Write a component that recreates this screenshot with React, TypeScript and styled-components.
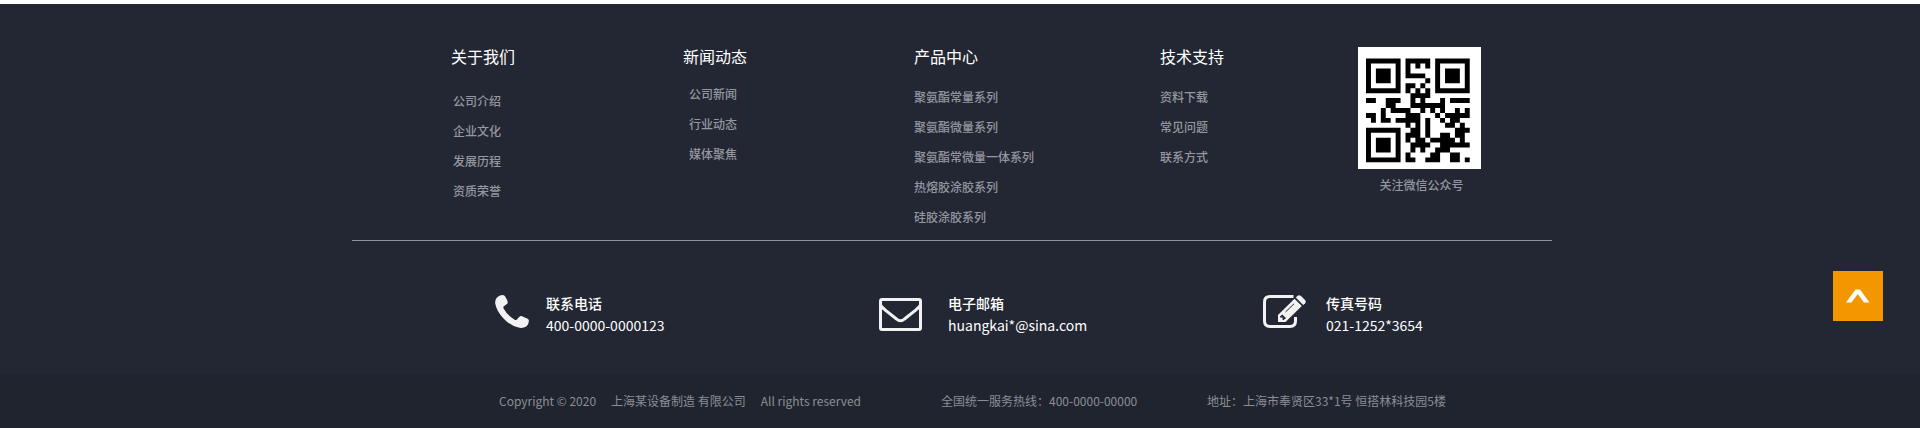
import React from 'react';
import styled, { createGlobalStyle } from 'styled-components';

const GlobalStyle = createGlobalStyle`
  * {
    box-sizing: border-box;
  }
  body {
    margin: 0;
    background: #fff;
    font-family: 'Noto Sans CJK SC', 'Noto Sans', sans-serif;
    font-size: 12px;
  }
`;

const Footer = styled.footer`
  margin-top: 4px;
  background: #232733;
  color: #9497a0;
`;

/* The content column sits in the page width less a 16px gutter on the right. */
const Band = styled.div`
  padding-right: 16px;
`;

const Container = styled.div`
  width: 100%;
  max-width: 1200px;
  margin: 0 auto;
`;

const SiteMap = styled(Container)`
  display: grid;
  grid-template-columns: 232fr 231fr 246fr 198fr 123fr;
  align-items: start;
  padding: 40px 71px 8px 99px;
  border-bottom: 1px solid #8f9197;
`;

const Heading = styled.h2`
  margin: 0;
  font-size: 16px;
  line-height: 24px;
  font-weight: 400;
  color: #fff;
`;

const LinkList = styled.ul<{ $top: number; $indent: number }>`
  list-style: none;
  margin: ${(p) => p.$top}px 0 0;
  padding: 0 0 0 ${(p) => p.$indent}px;
`;

const LinkItem = styled.li`
  line-height: 30px;
  font-weight: 500;
`;

const FooterLink = styled.a`
  color: inherit;
  text-decoration: none;
  white-space: nowrap;
  &:hover {
    color: #fff;
  }
`;

const QrFigure = styled.figure`
  margin: 3px 0 0;
  text-align: center;
`;

const QrSvg = styled.svg`
  display: block;
  width: 123px;
  height: 122px;
  background: #fff;
`;

const Caption = styled.figcaption`
  padding-left: 4px;
  line-height: 32px;
  font-weight: 500;
`;

const Contacts = styled(Container)`
  display: grid;
  grid-template-columns: 384fr 384fr 289fr;
  padding: 51px 0 38px 143px;
`;

const Contact = styled.div<{ $gap: number }>`
  display: flex;
  gap: ${(p) => p.$gap}px;
  color: #fff;
  font-size: 14px;
  line-height: 22px;
  white-space: nowrap;
`;

const ContactIcon = styled.svg`
  display: block;
  flex: none;
  margin-top: 3px;
  fill: #f2f2f2;
`;

const ContactTitle = styled.div`
  font-weight: 500;
`;

const LegalBand = styled(Band)`
  background: #20242e;
`;

const Legal = styled(Container)`
  display: grid;
  grid-template-columns: 442fr 266fr 345fr;
  padding-left: 147px;
  line-height: 54px;
  white-space: nowrap;
  color: #8b8e96;
`;

const Copyright = styled.div`
  display: flex;
  gap: 15px;
`;

const BackToTop = styled.button`
  position: fixed;
  right: 37px;
  bottom: 107px;
  display: flex;
  align-items: center;
  justify-content: center;
  width: 50px;
  height: 50px;
  padding: 0;
  border: 0;
  background: #f39700;
  cursor: pointer;
`;

const columns = [
  { title: '关于我们', top: 18, indent: 2, links: ['公司介绍', '企业文化', '发展历程', '资质荣誉'] },
  { title: '新闻动态', top: 11, indent: 6, links: ['公司新闻', '行业动态', '媒体聚焦'] },
  {
    title: '产品中心',
    top: 14,
    indent: 0,
    links: ['聚氨酯常量系列', '聚氨酯微量系列', '聚氨酯常微量一体系列', '热熔胶涂胶系列', '硅胶涂胶系列'],
  },
  { title: '技术支持', top: 14, indent: 0, links: ['资料下载', '常见问题', '联系方式'] },
];

const qrRows = [
  '#######.#####.#######',
  '#.....#.#.#.#.#.....#',
  '#.###.#.#.....#.###.#',
  '#.###.#.####..#.###.#',
  '#.###.#.....#.#.###.#',
  '#.....#.##.#..#.....#',
  '#######.#.#.#.#######',
  '.........####........',
  '##..###..#.#...#.####',
  '....##...#######.....',
  '...#.####..#.#.#..#.#',
  '##.#....###...#.#####',
  '.#.##.#####.#..#.##..',
  '........#.#.#...##.#.',
  '#######..##.#.....###',
  '#.....#.###.#..##.##.',
  '#.###.#.#.##.#####.#.',
  '#.###.#..####..######',
  '#.###.#..#.#..###....',
  '#.....#.#....##..##..',
  '#######.##..###..##.#',
];

const qrPath = qrRows
  .map((row, y) => row.split('').map((cell, x) => (cell === '#' ? `M${x} ${y}h1v1h-1z` : '')).join(''))
  .join('');

function PhoneIcon() {
  return (
    <ContactIcon width="34" height="34" viewBox="0 0 34 34" aria-hidden="true">
      <path d="M5 .4Q8 -.4 9.600 .7Q11.700 3.600 12.700 6.700Q13 8.200 11.500 9.300L8.600 11.600Q8 12.300 8.600 13.400Q12.500 20.500 20 24.900Q21 25.400 21.600 24.700L24.700 21.400Q25.500 20.700 26.500 21L32.600 23.800Q34 24.500 33.900 26Q33.600 29.800 31.600 31.300Q28 33.600 23.400 32.600Q15 30.500 8.500 23.500Q1.500 16 .2 8.500Q-.3 2.500 5 .4Z" />
    </ContactIcon>
  );
}

function MailIcon() {
  return (
    <ContactIcon width="43" height="37" viewBox="0 0 43 37" aria-hidden="true">
      <g fill="none" stroke="#f2f2f2" strokeWidth="3" strokeLinejoin="round">
        <rect x="1.500" y="4.500" width="40" height="30" rx="1.500" />
        <path d="M1.500 10Q3 12.600 6 14.800L17.500 24Q21.500 27.600 25.500 24L37 14.800Q40 12.600 41.500 10" />
      </g>
    </ContactIcon>
  );
}

function EditIcon() {
  return (
    <ContactIcon width="43" height="34" viewBox="0 0 43 34" aria-hidden="true">
      <path
        d="M30.500 1.500H7Q1.500 1.500 1.500 7V26Q1.500 31.500 7 31.500H27Q32.500 31.500 32.500 26V22"
        fill="none"
        stroke="#f2f2f2"
        strokeWidth="3"
      />
      <path d="M15 20L31.500 3.800L38.800 11L22.500 27H15Z" />
      <path d="M32.800 2.600L34.300 1Q36 -.6 38 1L42 5Q43.600 6.800 42 8.400L40.200 10Z" />
      <path d="M17 21.500L19.300 19.500L23 23.200L20.500 25H19.600V22.600H17Z" fill="#232733" />
      <path d="M22.500 17L31 8.800" fill="none" stroke="#232733" strokeWidth="1" />
    </ContactIcon>
  );
}

const contacts = [
  { title: '联系电话', value: '400-0000-0000123', gap: 17, Icon: PhoneIcon },
  { title: '电子邮箱', value: 'huangkai*@sina.com', gap: 26, Icon: MailIcon },
  { title: '传真号码', value: '021-1252*3654', gap: 20, Icon: EditIcon },
];

export default function App() {
  return (
    <Footer>
      <GlobalStyle />
      <Band>
        <SiteMap>
          {columns.map((column) => (
            <nav key={column.title} aria-label={column.title}>
              <Heading>{column.title}</Heading>
              <LinkList $top={column.top} $indent={column.indent}>
                {column.links.map((link) => (
                  <LinkItem key={link}>
                    <FooterLink href="#">{link}</FooterLink>
                  </LinkItem>
                ))}
              </LinkList>
            </nav>
          ))}
          <QrFigure>
            <QrSvg viewBox="-1.62 -2.350 24.900 24.700" preserveAspectRatio="none" aria-hidden="true">
              <path d={qrPath} fill="#000" />
            </QrSvg>
            <Caption>关注微信公众号</Caption>
          </QrFigure>
        </SiteMap>
        <Contacts>
          {contacts.map(({ title, value, gap, Icon }) => (
            <Contact key={title} $gap={gap}>
              <Icon />
              <div>
                <ContactTitle>{title}</ContactTitle>
                <div>{value}</div>
              </div>
            </Contact>
          ))}
        </Contacts>
      </Band>
      <LegalBand>
        <Legal>
          <Copyright>
            <span>Copyright © 2020</span>
            <span>上海某设备制造 有限公司</span>
            <span>All rights reserved</span>
          </Copyright>
          <span>全国统一服务热线：400-0000-00000</span>
          <span>地址：上海市奉贤区33*1号 恒搭林科技园5楼</span>
        </Legal>
      </LegalBand>
      <BackToTop type="button" aria-label="返回顶部">
        <svg width="24" height="14" viewBox="0 0 24 14" aria-hidden="true">
          <path d="M0 13.500L9.500 .5H14L23.500 13.500H18L11.700 5L5.500 13.500Z" fill="#fff" />
        </svg>
      </BackToTop>
    </Footer>
  );
}
